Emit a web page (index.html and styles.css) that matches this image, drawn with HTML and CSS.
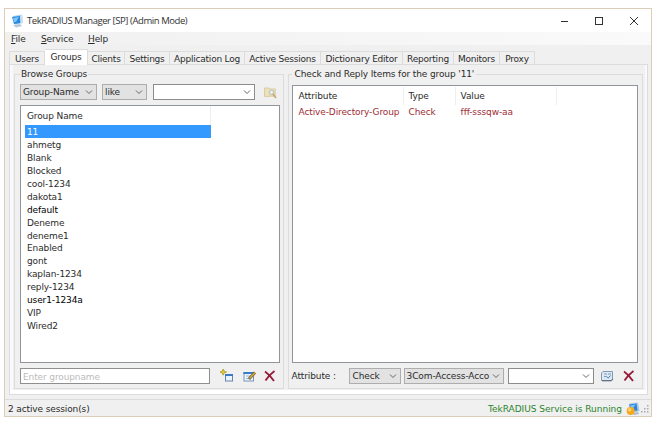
FILE: index.html
```html
<!DOCTYPE html>
<html lang="en">

<head>
	<meta charset="utf-8">
	<title>TekRADIUS Manager</title>
	<link rel="stylesheet" href="styles.css">
</head>

<body>
	<div class="window">
		<div class="titlebar">
			<svg class="app-icon" width="13" height="14" viewBox="0 0 13 14">
				<path d="M2 2 L11 0.5 L12 9 L4 10.5 Z" fill="#a9cdea"/>
				<path d="M1 3 L9 2 L9.5 9 L3 10 Z" fill="#2589e0"/>
				<path d="M2 4 L8 3 L5 8 L3 8 Z" fill="#7cc4f7"/>
				<path d="M9 2 L11 0.5 L12 9 L9.5 9 Z" fill="#cddfee"/>
				<path d="M2 11 L9 10 L11 12 L5 13.5 Z" fill="#b5c7d8"/>
			</svg>
			<span class="title">TekRADIUS Manager [SP] (Admin Mode)</span>
			<svg class="controls" width="80" height="12" viewBox="0 0 80 12" fill="none" stroke="#333">
				<path d="M1 6.5 H8"/>
				<rect x="35.5" y="2.5" width="7" height="7"/>
				<path d="M70 2 L78 10 M78 2 L70 10"/>
			</svg>
		</div>
		<div class="menubar">
			<span class="m-file"><u>F</u>ile</span>
			<span class="m-service"><u>S</u>ervice</span>
			<span class="m-help"><u>H</u>elp</span>
		</div>
		<div class="tabs">
			<div class="tab t-users">Users</div>
			<div class="tab t-groups active">Groups</div>
			<div class="tab t-clients">Clients</div>
			<div class="tab t-settings">Settings</div>
			<div class="tab t-log">Application Log</div>
			<div class="tab t-sessions">Active Sessions</div>
			<div class="tab t-dict">Dictionary Editor</div>
			<div class="tab t-report">Reporting</div>
			<div class="tab t-monitors">Monitors</div>
			<div class="tab t-proxy">Proxy</div>
		</div>
		<div class="page">
			<fieldset class="browse">
				<legend>Browse Groups</legend>
				<div class="filter">
					<div class="combo c-field"><span>Group-Name</span><svg class="arrow" width="8" height="5" viewBox="0 0 8 5"><path d="M1 0.5 L4 3.5 L7 0.5"/></svg></div>
					<div class="combo c-op"><span>like</span><svg class="arrow" width="8" height="5" viewBox="0 0 8 5"><path d="M1 0.5 L4 3.5 L7 0.5"/></svg></div>
					<div class="combo c-query edit"><span></span><svg class="arrow" width="8" height="5" viewBox="0 0 8 5"><path d="M1 0.5 L4 3.5 L7 0.5"/></svg></div>
					<svg class="i-find" width="13" height="13" viewBox="0 0 13 13">
						<path d="M0.5 2 H5 L6 3 H11.5 V10.5 H0.5 Z" fill="#eee0b8" stroke="#d9cda9"/>
						<path d="M5 4.5 H12 V11 H5 Z" fill="#e3d6ac"/>
						<circle cx="7.5" cy="6.3" r="2.2" fill="#e3eeee" stroke="#b9c3bd"/>
						<path d="M9 8 L12 12" stroke="#c2a878" stroke-width="1.5"/>
					</svg>
				</div>
				<div class="list groups">
					<div class="head"><span>Group Name</span></div>
					<div class="row selected">11</div>
					<div class="row">ahmetg</div>
					<div class="row">Blank</div>
					<div class="row">Blocked</div>
					<div class="row">cool-1234</div>
					<div class="row">dakota1</div>
					<div class="row dark">default</div>
					<div class="row">Deneme</div>
					<div class="row">deneme1</div>
					<div class="row">Enabled</div>
					<div class="row">gont</div>
					<div class="row">kaplan-1234</div>
					<div class="row">reply-1234</div>
					<div class="row dark">user1-1234a</div>
					<div class="row">VIP</div>
					<div class="row">Wired2</div>
				</div>
				<div class="actions">
					<div class="groupname">Enter groupname</div>
					<svg class="i-add" width="14" height="14" viewBox="0 0 14 14">
						<rect x="5.5" y="5.5" width="7" height="6.5" fill="#eaf3fc" stroke="#6685ad"/>
						<path d="M5 6 H13" stroke="#3b78c8" stroke-width="2"/>
						<path d="M3.2 0 L4.2 2.2 L6.5 3 L4.2 4 L3.2 6.2 L2.2 4 L0 3 L2.2 2.2 Z" fill="#e2cf32" stroke="#a9982b" stroke-width="0.8"/>
					</svg>
					<svg class="i-edit" width="14" height="14" viewBox="0 0 14 14">
						<rect x="1" y="3.5" width="9.5" height="8.5" fill="#edf5fc" stroke="#7894b4"/>
						<path d="M0.5 4 H11" stroke="#367cca" stroke-width="2"/>
						<path d="M3 7 H8 M3 9.5 H6" stroke="#8db5dc"/>
						<path d="M6 10 L12 3.5" stroke="#6b5425" stroke-width="2.8"/>
						<path d="M6.5 9.5 L12 3.5" stroke="#d6a847" stroke-width="1.6"/>
					</svg>
					<svg class="i-del" width="12" height="12" viewBox="0 0 12 12">
						<path d="M1 1.5 Q6 5 10 11 M10.5 1 Q5 5 1.5 10.5" fill="none" stroke="#961c3b" stroke-width="1.8"/>
					</svg>
				</div>
			</fieldset>
			<fieldset class="items">
				<legend>Check and Reply Items for the group '11'</legend>
				<div class="list attrs">
					<div class="cols heads"><span>Attribute</span><span>Type</span><span>Value</span></div>
					<div class="cols check"><span>Active-Directory-Group</span><span>Check</span><span>fff-sssqw-aa</span></div>
				</div>
				<div class="actions">
					<label>Attribute :</label>
					<div class="combo c-type"><span>Check</span><svg class="arrow" width="8" height="5" viewBox="0 0 8 5"><path d="M1 0.5 L4 3.5 L7 0.5"/></svg></div>
					<div class="combo c-attr"><span>3Com-Access-Acco</span><svg class="arrow" width="8" height="5" viewBox="0 0 8 5"><path d="M1 0.5 L4 3.5 L7 0.5"/></svg></div>
					<div class="combo c-value edit"><span></span><svg class="arrow" width="8" height="5" viewBox="0 0 8 5"><path d="M1 0.5 L4 3.5 L7 0.5"/></svg></div>
					<svg class="i-save" width="13" height="12" viewBox="0 0 13 12">
						<path d="M2 1.5 H11.5 V9 L10 10.5 H0.5 V3 Z" fill="#dce9f5" stroke="#8799ac"/>
						<path d="M1 10.8 H10.5 L12 9" fill="none" stroke="#50647a"/>
						<path d="M3 4 H6 M3 6.5 H6 M7 4 H10" stroke="#7b9dbd"/>
						<path d="M6 7 L7.3 8 L9.5 5.5" fill="none" stroke="#4a7eae"/>
					</svg>
					<svg class="i-del" width="12" height="12" viewBox="0 0 12 12">
						<path d="M1 1.5 Q6 5 10 11 M10.5 1 Q5 5 1.5 10.5" fill="none" stroke="#961c3b" stroke-width="1.8"/>
					</svg>
				</div>
			</fieldset>
		</div>
		<div class="statusbar">
			<span class="sessions">2 active session(s)</span>
			<span class="service">TekRADIUS Service is Running</span>
			<svg class="i-service" width="14" height="14" viewBox="0 0 14 14">
				<path d="M3.5 1.5 L12 0.5 L13.5 9 L6 11 Z" fill="#a8c9e7"/>
				<path d="M3 2.5 L10.5 1.5 L11.5 8.5 L5 9.5 Z" fill="#2c84db"/>
				<path d="M4 3.5 L9.5 2.5 L6 8 Z" fill="#7fc4f4"/>
				<path d="M7 11 L12 10 L13 12 L8 13 Z" fill="#a9bdcf"/>
				<circle cx="4.7" cy="9" r="4" fill="#f3a81f"/>
				<circle cx="3.7" cy="7.7" r="1.7" fill="#fbd56b"/>
			</svg>
			<svg class="grip" width="9" height="9" viewBox="0 0 9 9" fill="#aaa">
				<rect x="6" y="0" width="1.5" height="1.5"/>
				<rect x="3" y="3" width="1.5" height="1.5"/>
				<rect x="6" y="3" width="1.5" height="1.5"/>
				<rect x="0" y="6" width="1.5" height="1.5"/>
				<rect x="3" y="6" width="1.5" height="1.5"/>
				<rect x="6" y="6" width="1.5" height="1.5"/>
			</svg>
		</div>
	</div>
</body>

</html>
```
FILE: styles.css
```css
* {
	box-sizing: border-box;
}

body {
	margin: 0;
	background: #fff;
	color: #2b2b2b;
	font-family: "DejaVu Sans", Verdana, sans-serif;
	font-size: 9px;
	letter-spacing: -0.12px;
	line-height: 12px;
	white-space: nowrap;
}

svg {
	display: block;
	flex: none;
}

.window {
	display: flex;
	flex-direction: column;
	width: 648px;
	height: 409px;
	margin: 8px 0 0 4px;
	background: #f0f0f0;
	border: 1px solid #dccdb9;
}

.titlebar {
	display: flex;
	align-items: center;
	height: 23px;
	padding: 0 11px 0 6px;
	background: #fff;
}

.title {
	margin-left: 3px;
	font-family: "Open Sans", sans-serif;
	font-size: 9.5px;
	letter-spacing: -0.43px;
	color: #333;
}

.controls {
	margin-left: auto;
}

.menubar {
	display: flex;
	height: 17px;
	padding: 1px 0 0 6px;
	background: linear-gradient(to right, #f0f0f0, #fafafa);
	background-size: 100% 13px;
	background-repeat: no-repeat;
}

.m-file {
	width: 30px;
}

.m-service {
	width: 47px;
}

.tabs {
	display: flex;
	align-items: flex-end;
	height: 15px;
	padding-left: 4px;
	letter-spacing: -0.22px;
}

.tab {
	height: 13px;
	padding-top: 1px;
	text-align: center;
	border: 1px solid #dcdcdc;
	border-width: 1px 1px 0 0;
}

.tab.active {
	height: 16px;
	padding-top: 1px;
	background: #fff;
	margin-bottom: -1px;
	position: relative;
}

.t-users { width: 36px; border-left-width: 1px; }
.t-groups { width: 43px; }
.t-clients { width: 37px; }
.t-settings { width: 45px; }
.t-log { width: 75px; }
.t-sessions { width: 76px; }
.t-dict { width: 82px; }
.t-report { width: 51px; }
.t-monitors { width: 46px; }
.t-proxy { width: 35px; }

.page {
	display: flex;
	gap: 4px;
	height: 331px;
	margin: 0 3px 0 4px;
	padding: 3px 4px 5px 4px;
	border: 1px solid #dcdcdc;
	box-shadow: inset 0 -4px #fff, inset 3px 0 #f9f9f9, inset -2px 0 #f9f9f9;
}

fieldset {
	min-width: 0;
	margin: 0;
	padding: 0 0 0 5px;
	border: 1px solid #dcdcdc;
}

legend {
	height: 12px;
	padding: 0 1px;
}

.browse {
	width: 270px;
}

.items {
	width: 356px;
	padding-left: 3px;
}

.items legend {
	padding: 0 2px 0 3px;
}

.filter {
	display: flex;
	align-items: center;
	height: 16px;
	margin-top: 4px;
}

.combo {
	display: flex;
	align-items: center;
	justify-content: space-between;
	height: 16px;
	padding: 0 3px 0 2px;
	background: #e2e2e2;
	border: 1px solid #adadad;
}

.combo.edit {
	background: #fff;
	border-color: #8c8c8c;
}

.arrow path {
	fill: none;
	stroke: #666;
}

.c-field { width: 77px; }
.c-op { width: 45px; margin-left: 5px; }
.c-query { width: 102px; margin-left: 6px; }
.i-find { margin-left: 9px; }

.list {
	background: #fff;
	border: 1px solid #8f959b;
}

.groups {
	width: 260px;
	height: 258px;
	margin-top: 5px;
	padding-left: 4px;
}

.head {
	width: 186px;
	height: 19px;
	padding: 4px 0 0 2px;
	border-right: 1px solid #eee;
}

.row {
	width: 186px;
	height: 12.95px;
	padding-left: 2px;
	line-height: 14px;
}

.row.dark {
	color: #000;
}

.row.selected {
	color: #fff;
	background: #3399ff;
}

.actions {
	display: flex;
	align-items: center;
	height: 16px;
	margin-top: 5px;
}

.groupname {
	width: 190px;
	height: 16px;
	padding: 2px 2px 0;
	color: #bbb;
	background: #fff;
	border: 1px solid #8f8f8f;
}

.i-add { margin-left: 10px; }
.i-edit { margin-left: 9px; }
.browse .i-del { margin-left: 7px; }

.attrs {
	width: 346px;
	height: 278px;
	margin-top: 5px;
	padding: 1px 0 0 5px;
}

.cols {
	display: grid;
	grid-template-columns: 106px 52px 101px;
	height: 18px;
	line-height: 18px;
}

.heads span {
	border-right: 1px solid #eee;
}

.cols span {
	padding-left: 1px;
}

.cols span + span {
	padding-left: 5px;
}

.check {
	height: 15px;
	line-height: 15px;
	color: #a02d35;
}

.items label {
	width: 57px;
}

.c-type { width: 52px; padding-left: 3px; }
.c-attr { width: 100px; margin-left: 3px; }
.c-value { width: 86px; margin-left: 4px; }
.i-save { margin-left: 7px; }
.items .i-del { margin-left: 9px; }

.statusbar {
	display: flex;
	align-items: center;
	flex: 1;
	margin-top: 4px;
	padding: 2px 1px 0 3px;
	border-top: 1px solid #dcdcdc;
}

.service {
	margin-left: auto;
	color: #2b842b;
	letter-spacing: -0.02px;
}

.i-service {
	margin-left: 4px;
}

.grip {
	margin-left: 1px;
	align-self: flex-end;
	margin-bottom: 2px;
}
```
